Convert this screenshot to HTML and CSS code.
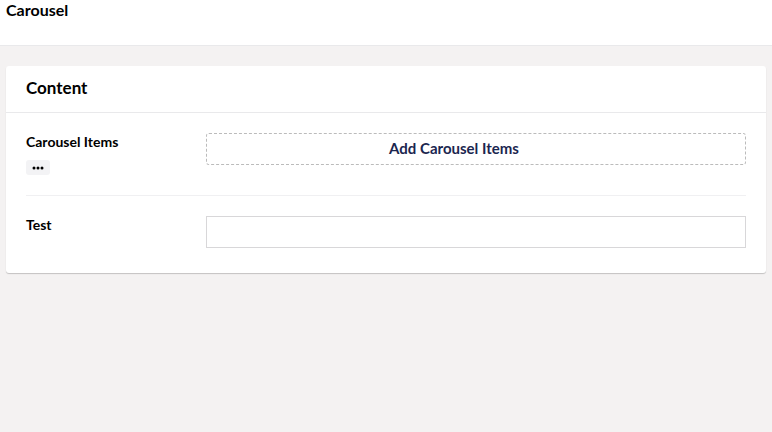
FILE: index.html
```html
<!DOCTYPE html>
<html lang="en">
<head>
    <meta charset="UTF-8">
    <meta name="viewport" content="width=device-width, initial-scale=1.0">
    <title>Carousel</title>
    <link rel="stylesheet" href="styles.css">
</head>
<body>
    <div class="topbar">Carousel</div>

    <div class="main">
        <div class="card">
            <div class="card-header">Content</div>
            <div class="card-body">
                <div class="property">
                    <div class="property-label">
                        <div>Carousel Items</div>
                        <button class="more-button">
                            <svg width="12" height="4" viewBox="0 0 12 4">
                                <circle cx="2" cy="2" r="1.5" fill="#000"/>
                                <circle cx="6" cy="2" r="1.5" fill="#000"/>
                                <circle cx="10" cy="2" r="1.5" fill="#000"/>
                            </svg>
                        </button>
                    </div>
                    <div class="property-editor">
                        <button class="add-button">Add Carousel Items</button>
                    </div>
                </div>
                <div class="property">
                    <div class="property-label">
                        <div>Test</div>
                    </div>
                    <div class="property-editor">
                        <input type="text" class="text-input">
                    </div>
                </div>
            </div>
        </div>
    </div>
</body>
</html>
```

FILE: styles.css
```css
body {
    font-family: Lato, "Open Sans", sans-serif;
    margin: 0;
    padding: 0;
    height: 100vh;
    background-color: #f4f2f2;
    color: #1b264f;
}
.topbar {
    background-color: white;
    height: 46px;
    border-bottom: 1px solid #e9e9eb;
    padding: 0 6px;
    font-size: 16px;
    font-weight: bold;
    color: #000;
    line-height: 20px;
    box-sizing: border-box;
}
.main {
    padding: 20px 6px;
}
.card {
    background-color: white;
    border-radius: 3px;
    box-shadow: 0 1px 1px rgba(0,0,0,0.2);
}
.card-header {
    height: 47px;
    line-height: 44px;
    padding: 0 20px;
    font-size: 17px;
    font-weight: bold;
    color: #000;
    border-bottom: 1px solid #e9e9eb;
    box-sizing: border-box;
}
.card-body {
    padding: 0 20px 5px;
}
.property {
    display: flex;
    padding: 20px 0;
    border-bottom: 1px solid #f0f0f2;
}
.property:last-child {
    border-bottom: none;
}
.property-label {
    width: 180px;
    flex-shrink: 0;
    font-size: 14px;
    line-height: 18px;
    font-weight: bold;
    color: #000;
}
.more-button {
    display: flex;
    align-items: center;
    justify-content: center;
    margin-top: 9px;
    width: 24px;
    height: 15px;
    padding: 0;
    border: none;
    border-radius: 3px;
    background-color: #f3f3f5;
}
.property-editor {
    flex: 1;
}
.add-button {
    display: block;
    width: 100%;
    height: 32px;
    padding: 0 44px 3px 0;
    background-color: white;
    border: 1px dashed #bbbbbb;
    border-radius: 3px;
    font-family: Lato, sans-serif;
    font-size: 15px;
    font-weight: bold;
    color: #1b264f;
    cursor: pointer;
}
.text-input {
    display: block;
    width: 100%;
    height: 32px;
    box-sizing: border-box;
    border: 1px solid #d8d7d9;
    border-radius: 0;
    font-family: Lato, sans-serif;
    font-size: 14px;
    padding: 0 8px;
}
```
